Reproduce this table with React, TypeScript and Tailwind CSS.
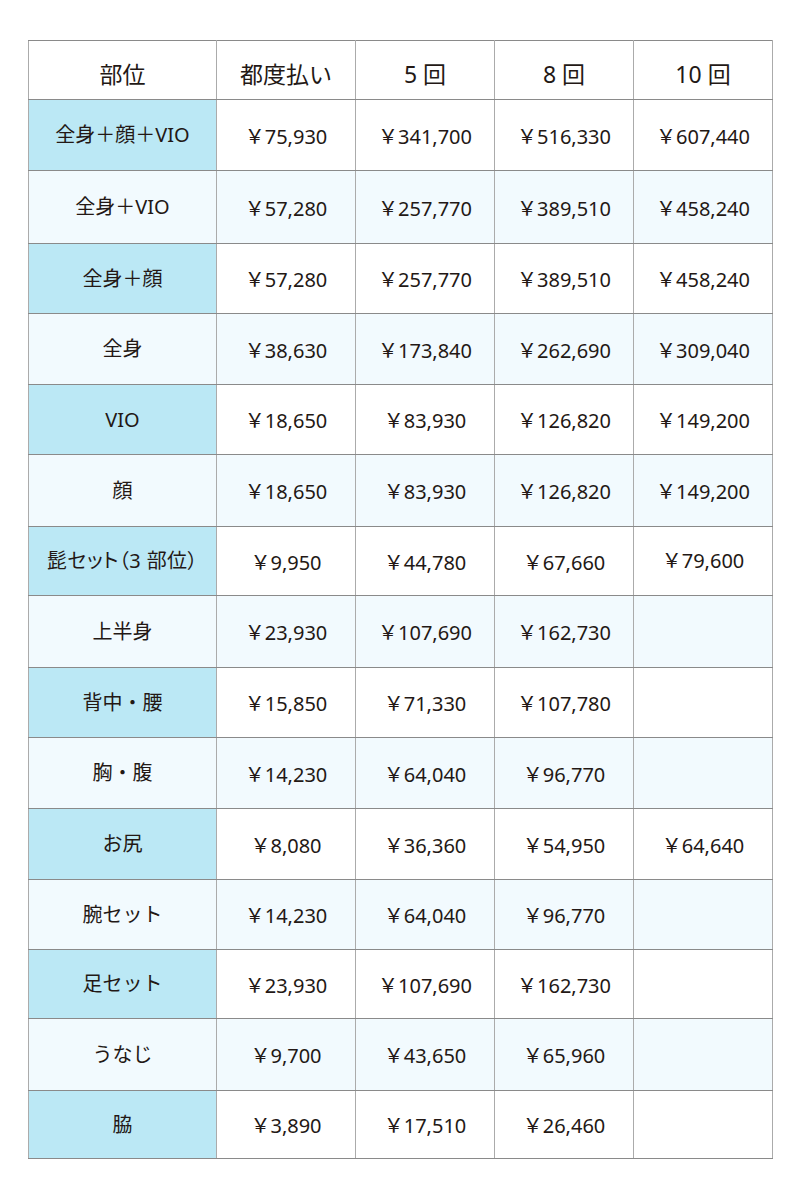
const font = "font-['Noto_Sans','Noto_Sans_CJK_JP',sans-serif]";

type Row = {
  name: string;
  prices: string[];
  h: string;
  palt?: boolean;
  raise10?: boolean;
};

const rows: Row[] = [
  { name: "全身＋顔＋VIO", prices: ["75,930", "341,700", "516,330", "607,440"], h: "h-[71px]" },
  { name: "全身＋VIO", prices: ["57,280", "257,770", "389,510", "458,240"], h: "h-[73px]" },
  { name: "全身＋顔", prices: ["57,280", "257,770", "389,510", "458,240"], h: "h-[70px]" },
  { name: "全身", prices: ["38,630", "173,840", "262,690", "309,040"], h: "h-[71px]" },
  { name: "VIO", prices: ["18,650", "83,930", "126,820", "149,200"], h: "h-[70px]" },
  { name: "顔", prices: ["18,650", "83,930", "126,820", "149,200"], h: "h-[72px]" },
  { name: "髭セット（3 部位）", prices: ["9,950", "44,780", "67,660", "79,600"], h: "h-[69px]", palt: true, raise10: true },
  { name: "上半身", prices: ["23,930", "107,690", "162,730", ""], h: "h-[72px]" },
  { name: "背中・腰", prices: ["15,850", "71,330", "107,780", ""], h: "h-[70px]" },
  { name: "胸・腹", prices: ["14,230", "64,040", "96,770", ""], h: "h-[71px]" },
  { name: "お尻", prices: ["8,080", "36,360", "54,950", "64,640"], h: "h-[71px]" },
  { name: "腕セット", prices: ["14,230", "64,040", "96,770", ""], h: "h-[70px]" },
  { name: "足セット", prices: ["23,930", "107,690", "162,730", ""], h: "h-[69px]" },
  { name: "うなじ", prices: ["9,700", "43,650", "65,960", ""], h: "h-[72px]" },
  { name: "脇", prices: ["3,890", "17,510", "26,460", ""], h: "h-[68px]" },
];

const headers = ["部位", "都度払い", "5 回", "8 回", "10 回"];

export default function App() {
  return (
    <div className={`w-[800px] h-[1185px] bg-white pt-[40px] pl-[28px] ${font} text-[#231815]`}>
      <table className="w-[744px] table-fixed border-collapse border border-[#8a8a8a]">
        <colgroup>
          <col className="w-[188px]" />
          <col className="w-[139px]" />
          <col className="w-[139px]" />
          <col className="w-[139px]" />
          <col className="w-[139px]" />
        </colgroup>
        <thead>
          <tr className="h-[59px] bg-white">
            {headers.map((h) => (
              <th
                key={h}
                className="border-y border-y-[#8a8a8a] border-x border-x-[#ababab] text-[23px] font-normal text-center align-middle pt-[8px]"
              >
                {h}
              </th>
            ))}
          </tr>
        </thead>
        <tbody>
          {rows.map((row, i) => {
            const odd = i % 2 === 0;
            return (
              <tr key={row.name} className={`${row.h} ${odd ? "bg-white" : "bg-[#f2fafe]"}`}>
                <td
                  className={`border-y border-y-[#8a8a8a] border-x border-x-[#ababab] text-center align-middle text-[20px] ${
                    odd ? "bg-[#bbe8f5]" : ""
                  } ${row.palt ? "[font-feature-settings:'palt'] tracking-[0.02em]" : ""}`}
                >
                  {row.name}
                </td>
                {row.prices.map((p, j) => (
                  <td
                    key={j}
                    className={`border-y border-y-[#8a8a8a] border-x border-x-[#ababab] text-center align-middle text-[20px] pt-[3px] ${
                      row.raise10 && j === 3 ? "pt-0 pb-[3px]" : ""
                    }`}
                  >
                    {p ? `￥${p}` : ""}
                  </td>
                ))}
              </tr>
            );
          })}
        </tbody>
      </table>
    </div>
  );
}
